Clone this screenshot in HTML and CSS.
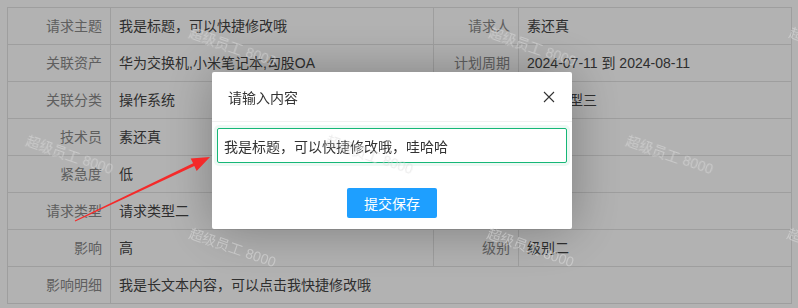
FILE: index.html
```html
<!DOCTYPE html>
<html>

<head>
    <title>请求详情</title>
    <link rel="stylesheet" href="styles.css">
</head>

<body>
    <table class="detail">
        <colgroup>
            <col class="col-label1">
            <col class="col-value1">
            <col class="col-label2">
            <col class="col-value2">
        </colgroup>
        <tr>
            <td class="label">请求主题</td>
            <td class="value">我是标题，可以快捷修改哦</td>
            <td class="label">请求人</td>
            <td class="value">素还真</td>
        </tr>
        <tr>
            <td class="label">关联资产</td>
            <td class="value">华为交换机,小米笔记本,勾股OA</td>
            <td class="label">计划周期</td>
            <td class="value">2024-07-11 到 2024-08-11</td>
        </tr>
        <tr>
            <td class="label">关联分类</td>
            <td class="value">操作系统</td>
            <td class="label">服务类型</td>
            <td class="value">服务类型三</td>
        </tr>
        <tr>
            <td class="label">技术员</td>
            <td class="value">素还真</td>
            <td class="label">状态</td>
            <td class="value"></td>
        </tr>
        <tr>
            <td class="label">紧急度</td>
            <td class="value">低</td>
            <td class="label"></td>
            <td class="value"></td>
        </tr>
        <tr>
            <td class="label">请求类型</td>
            <td class="value">请求类型二</td>
            <td class="label"></td>
            <td class="value"></td>
        </tr>
        <tr>
            <td class="label">影响</td>
            <td class="value">高</td>
            <td class="label">级别</td>
            <td class="value">级别二</td>
        </tr>
        <tr>
            <td class="label">影响明细</td>
            <td class="value" colspan="3">我是长文本内容，可以点击我快捷修改哦</td>
        </tr>
    </table>

    <div class="shade"></div>

    <div class="layer">
        <div class="layer-title">
            <span>请输入内容</span>
            <svg class="layer-close" width="12" height="12" viewBox="0 0 12 12">
                <path d="M1 1 L11 11 M11 1 L1 11" stroke="#333" stroke-width="1.1" fill="none" />
            </svg>
        </div>
        <div class="layer-content">
            <input type="text" class="layer-input" value="我是标题，可以快捷修改哦，哇哈哈">
        </div>
        <div class="layer-btns">
            <button class="btn-save">提交保存</button>
        </div>
    </div>

    <svg class="arrow" width="798" height="308" viewBox="0 0 798 308">
        <polygon fill="#f42a2a"
            points="75.2,221.4 194.3,166.1 196.7,171 210,157 190.7,158.4 193.1,163.3 74.8,220.6" />
    </svg>

    <div class="watermarks">
        <span class="wm" style="left:187px;top:37px">超级员工 8000</span>
        <span class="wm" style="left:487px;top:37px">超级员工 8000</span>
        <span class="wm" style="left:787px;top:37px">超级</span>
        <span class="wm" style="left:24px;top:145px">超级员工 8000</span>
        <span class="wm" style="left:324px;top:145px">超级员工 8000</span>
        <span class="wm" style="left:624px;top:145px">超级员工 8000</span>
        <span class="wm" style="left:187px;top:238px">超级员工 8000</span>
        <span class="wm" style="left:485px;top:238px">超级员工 8000</span>
        <span class="wm" style="left:785px;top:238px">超级</span>
    </div>
</body>

</html>
```

FILE: styles.css
```css
body {
    font-family: "Liberation Sans", "Noto Sans CJK SC", sans-serif;
    font-size: 14px;
    background-color: #fff;
    margin: 0;
    padding: 7px;
    height: 308px;
    box-sizing: border-box;
    overflow: hidden;
}

.detail {
    border-collapse: collapse;
    table-layout: fixed;
    width: 785px;
}

.col-label1 {
    width: 103px;
}

.col-value1 {
    width: 323px;
}

.col-label2 {
    width: 85px;
}

.detail td {
    border: 1px solid #e3e3e3;
    height: 36px;
    padding: 0;
    line-height: 20px;
    white-space: nowrap;
    overflow: hidden;
}

.detail .label {
    text-align: right;
    padding-right: 8px;
    color: #888;
}

.detail .value {
    padding-left: 8px;
    color: #444;
}

.shade {
    position: fixed;
    left: 0;
    top: 0;
    right: 0;
    bottom: 0;
    background-color: rgba(0, 0, 0, 0.3);
}

.layer {
    position: fixed;
    left: 212px;
    top: 72px;
    width: 360px;
    height: 157px;
    background-color: #fff;
    border-radius: 2px;
    box-shadow: 1px 1px 50px rgba(0, 0, 0, 0.3);
}

.layer-title {
    height: 49px;
    border-bottom: 1px solid #f0f0f0;
    display: flex;
    align-items: center;
    justify-content: space-between;
    padding: 0 17px 0 16px;
    color: #333;
    font-size: 14px;
}

.layer-content {
    padding: 6px 5px 0 5px;
}

.layer-input {
    display: block;
    width: 350px;
    height: 35px;
    box-sizing: border-box;
    border: 1px solid #16b777;
    border-radius: 2px;
    box-shadow: 0 0 0 3px rgba(22, 183, 119, 0.08);
    padding: 0 6px;
    font-family: "Liberation Sans", "Noto Sans CJK SC", sans-serif;
    font-size: 14px;
    color: #333;
    outline: none;
}

.layer-btns {
    display: flex;
    justify-content: center;
    padding-top: 25px;
}

.btn-save {
    width: 90px;
    height: 30px;
    border: none;
    border-radius: 2px;
    background-color: #1e9fff;
    color: #fff;
    font-family: "Liberation Sans", "Noto Sans CJK SC", sans-serif;
    font-size: 14px;
    cursor: pointer;
}

.arrow {
    position: fixed;
    left: 0;
    top: 0;
    pointer-events: none;
}

.watermarks {
    position: fixed;
    left: 0;
    top: 0;
    width: 798px;
    height: 308px;
    overflow: hidden;
    pointer-events: none;
}

.wm {
    position: absolute;
    width: 92px;
    height: 20px;
    line-height: 20px;
    font-size: 14px;
    color: rgba(220, 220, 220, 0.55);
    white-space: nowrap;
    transform: rotate(19deg);
}
```
